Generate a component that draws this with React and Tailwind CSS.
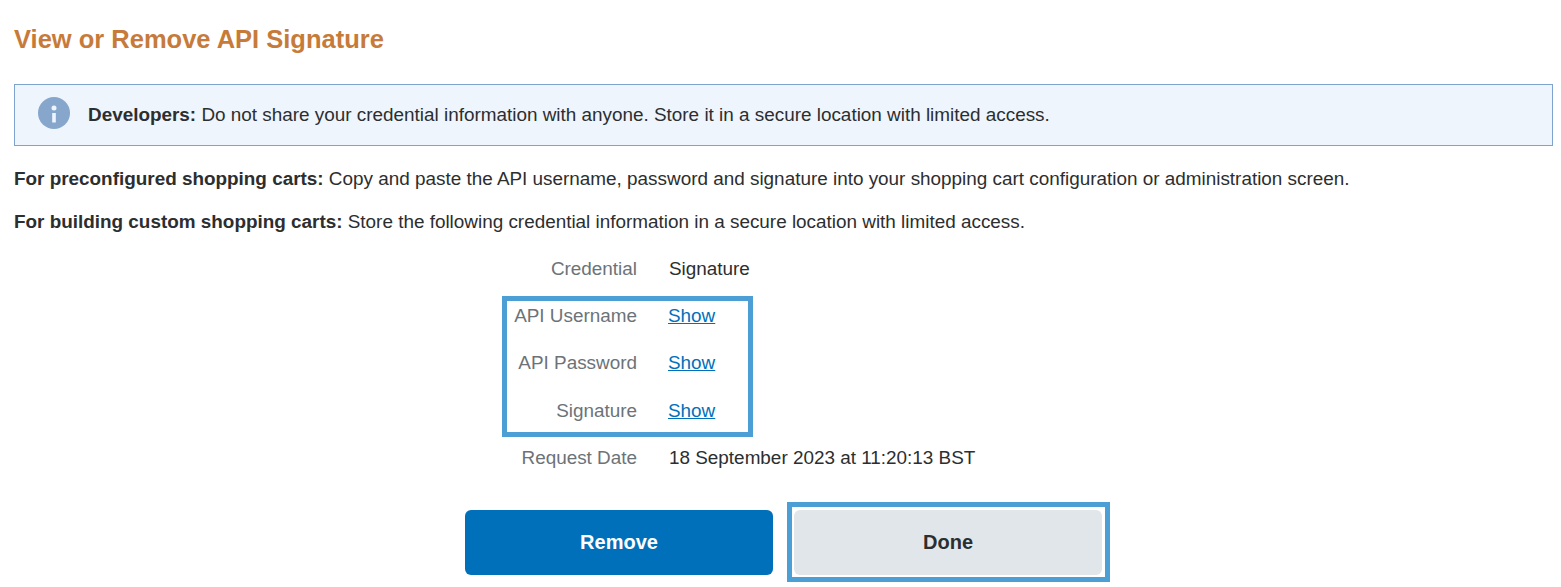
function InfoIcon() {
  return (
    <svg width="32" height="32" viewBox="0 0 32 32" className="mb-[4px] shrink-0">
      <circle cx="16" cy="16" r="16" fill="#86a7cb" />
      <circle cx="16" cy="11" r="2.5" fill="#eef5fd" />
      <rect x="14.2" y="16" width="3.6" height="9.5" fill="#eef5fd" />
    </svg>
  )
}

function Row({ label, children }) {
  return (
    <div className="flex h-[28px] items-center">
      <div className="w-[130px] text-right text-[#6c7378]">{label}</div>
      <div className="ml-[32px] whitespace-nowrap text-[#2c2e2f]">{children}</div>
    </div>
  )
}

function ShowLink() {
  return <a href="#" className="-ml-[1px] text-[#0070ba] underline">Show</a>
}

export default function App() {
  return (
    <div className="w-[1561px] h-[587px] overflow-hidden bg-white pl-[14px] pr-[8px] text-[18.9px] text-[#2c2e2f] font-['Liberation_Sans',Arial,sans-serif]">
      <h1 className="pt-[24px] text-[25.5px] leading-[30px] font-bold text-[#c77b3a]">View or Remove API Signature</h1>
      <div className="mt-[30px] flex h-[62px] items-center border border-[#7fa3cf] bg-[#eef5fd] pl-[23px]">
        <InfoIcon />
        <p className="ml-[18px]"><b>Developers:</b> Do not share your credential information with anyone. Store it in a secure location with limited access.</p>
      </div>
      <p className="mt-[22px] leading-[21px]"><b>For preconfigured shopping carts:</b> Copy and paste the API username, password and signature into your shopping cart configuration or administration screen.</p>
      <p className="mt-[22px] leading-[21px]"><b>For building custom shopping carts:</b> Store the following credential information in a secure location with limited access.</p>
      <div className="mt-[23px] ml-[493px]">
        <Row label="Credential">Signature</Row>
        <div className="mt-[13px] -ml-[5px] flex w-[251px] flex-col gap-[19.5px] border-[5px] border-[#4b9fd5] pt-[1px] pb-[7px]">
          <Row label="API Username"><ShowLink /></Row>
          <Row label="API Password"><ShowLink /></Row>
          <Row label="Signature"><ShowLink /></Row>
        </div>
        <div className="mt-[7px]">
          <Row label="Request Date">18 September 2023 at 11:20:13 BST</Row>
        </div>
      </div>
      <div className="mt-[30px] ml-[451px] flex items-start">
        <button className="mt-[8px] h-[65px] w-[308px] rounded-[6px] bg-[#0070ba] pb-[2px] text-[20px] font-bold text-white">Remove</button>
        <div className="ml-[14px] border-[5px] border-[#4b9fd5] pt-[3px] pr-[3px] pb-[2px] pl-[2px]">
          <button className="h-[65px] w-[308px] rounded-[6px] bg-[#e1e6ea] pb-[2px] text-[20px] font-bold text-[#2c2e2f]">Done</button>
        </div>
      </div>
    </div>
  )
}
